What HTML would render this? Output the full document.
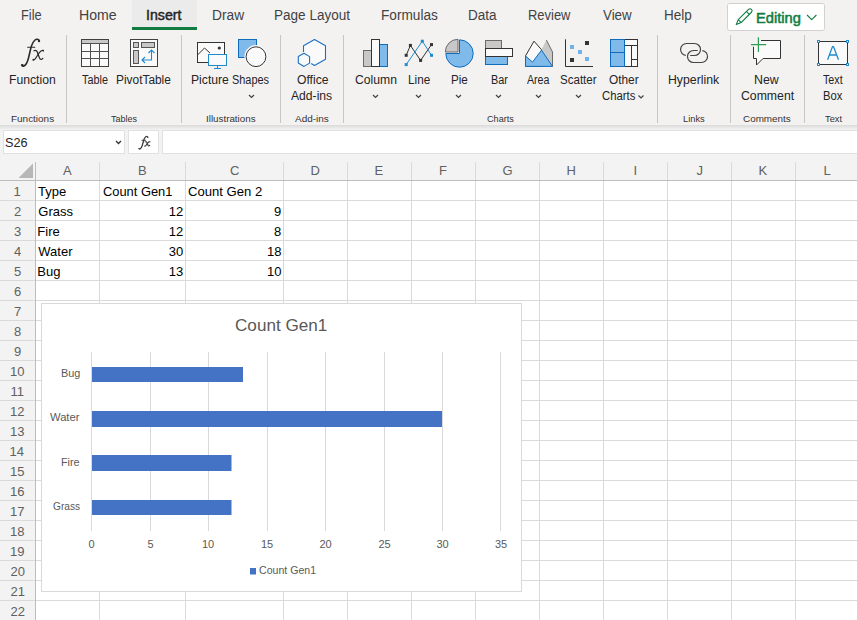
<!DOCTYPE html>
<html><head><meta charset="utf-8">
<style>
html,body{margin:0;padding:0}
body{width:857px;height:620px;overflow:hidden;position:relative;background:#fff;font-family:"Liberation Sans",sans-serif}
.t{position:absolute;white-space:nowrap;line-height:1;transform-origin:0 0}
svg{position:absolute;left:0;top:0}
</style></head><body>
<svg width="857" height="620" viewBox="0 0 857 620">
<!-- ribbon -->
<rect x="0" y="0" width="857" height="125" fill="#f3f2f1"/>
<defs><linearGradient id="sh" x1="0" y1="0" x2="0" y2="1"><stop offset="0" stop-color="#000" stop-opacity="0.10"/><stop offset="1" stop-color="#000" stop-opacity="0"/></linearGradient></defs>
<rect x="0" y="125" width="857" height="37" fill="#f3f3f3"/>
<rect x="0" y="125" width="857" height="5" fill="url(#sh)"/>
<!-- insert tab -->
<rect x="132" y="0" width="65" height="27" fill="#ebebeb"/>
<rect x="132" y="27" width="65" height="3" fill="#107c41"/>
<!-- editing button -->
<rect x="727.5" y="3.5" width="97" height="27" rx="2" fill="#fff" stroke="#d1d1d1"/>
<g fill="none" stroke="#107c41" stroke-width="1.1" stroke-linejoin="round">
<path d="M736.2,24.6 L738.25,19.65 L748.54,9.36 A2.05,2.05 0 0 1 751.44,12.26 L741.15,22.55 Z"/>
<path d="M738.25,19.65 L741.15,22.55 M746.42,11.48 L749.32,14.38"/>
<polyline points="807,15 811.7,19.6 816.4,15"/>
</g>
<!-- dividers -->
<g fill="#c8c6c4">
<rect x="66" y="35" width="1" height="88"/><rect x="181" y="35" width="1" height="88"/>
<rect x="280" y="35" width="1" height="88"/><rect x="343" y="35" width="1" height="88"/>
<rect x="657" y="35" width="1" height="88"/><rect x="730" y="35" width="1" height="88"/>
<rect x="804" y="35" width="1" height="88"/>
</g>
<g><g fill="none" stroke="#2b2b2b" stroke-linecap="round">
<path d="M39.2,40.6 C38.5,39 36.5,38.8 35,40 C33,41.7 31.5,45 30.5,49.5 L28.5,58 C27.5,62 26,65 24,66 C23,66.4 22,66 21.8,65" stroke-width="1.6"/>
<path d="M27.7,47.3 H34.8" stroke-width="1.1"/>
<path d="M34,50.8 C35.5,50 36.8,50.5 37.5,52.5 L39.5,58 C40.2,59.8 41.5,60 42.8,58.3" stroke-width="1.25"/>
<path d="M43.4,50.5 C42,50 40.5,51 39,53 L35.5,58.5 C34.8,59.6 34,60 33.2,59.8" stroke-width="1.25"/>
</g><g fill="#2b2b2b"><circle cx="39" cy="41" r="1.2"/><circle cx="22.4" cy="65.1" r="1.2"/><circle cx="43.2" cy="50.7" r="0.9"/><circle cx="33.4" cy="59.7" r="0.9"/></g></g>
<!-- Table icon -->
<g stroke-width="1">
<rect x="81.5" y="39.5" width="27" height="27" fill="#fafafa" stroke="#404040"/>
<rect x="82" y="40" width="26" height="3" fill="#c8c8c8"/>
<path d="M82,43.5H108M82,51.5H108M82,58.5H108M90.5,43.5V66M99.5,43.5V66" stroke="#505050" fill="none"/>
</g>
<!-- PivotTable icon -->
<rect x="130.5" y="39.5" width="27" height="27" fill="#fafafa" stroke="#404040"/>
<g fill="#c8c8c8" stroke="#555">
<rect x="133.5" y="42.5" width="5" height="5"/><rect x="141.5" y="42.5" width="13" height="5"/><rect x="133.5" y="50.5" width="5" height="13"/>
</g>
<path d="M142,60H151.5V50 M145,57L142,60L145,63 M148.5,53L151.5,50L154.5,53" fill="none" stroke="#1e8bcd" stroke-width="1.1"/>
<!-- Picture icon -->
<rect x="197.5" y="42.5" width="27" height="20" fill="#fafafa" stroke="#333"/>
<polyline points="197.5,55 204.5,48 210,53" fill="none" stroke="#333"/>
<circle cx="219.3" cy="48" r="1.6" fill="#333"/>
<rect x="208.5" y="54.5" width="18" height="11" fill="#fafafa" stroke="#1e8bcd"/>
<path d="M217.5,66V68.5M214,68.5H221" stroke="#1e8bcd" fill="none"/>
<!-- Shapes icon -->
<rect x="238.5" y="39.5" width="18" height="18" fill="#7fbaea" stroke="#0f6cbd"/>
<circle cx="256" cy="56.7" r="11.6" fill="#f8f8f8"/>
<circle cx="256" cy="56.7" r="9.9" fill="#fafafa" stroke="#333"/>
<!-- Office Add-ins -->
<path d="M303.5,45.7 L314.5,39.5 L325.5,45.7 V59.3 L314.5,65.5 L303.5,59.3 Z" fill="#fafafa"/>
<g fill="none" stroke="#1a70c5" stroke-width="1.1" stroke-linejoin="round">
<path d="M303.5,51.9 V45.7 L314.5,39.5 L325.5,45.7 V59.3 L314.5,65.5 L311.2,63.6"/>
<path d="M304,53.3 L309.6,56.6 V63.1 L304,66.4 L298.3,63.1 V56.6 Z" fill="#fafafa"/>
</g>
<!-- Column icon -->
<rect x="363.5" y="50.5" width="8" height="16" fill="#c8c8c8" stroke="#6b6b6b"/>
<rect x="379.5" y="44.5" width="8" height="22" fill="#7fbaea" stroke="#0f6cbd"/>
<rect x="371.5" y="39.5" width="8" height="27" fill="#fafafa" stroke="#333"/>
<!-- Line icon -->
<polyline points="406.2,55.3 410.4,45.4 420.6,60.4 431.5,44.6" fill="none" stroke="#333"/>
<polyline points="406.2,64.6 422.3,41.2 431.5,55.3" fill="none" stroke="#1e8bcd"/>
<g fill="#333"><rect x="404.7" y="53.8" width="3" height="3"/><rect x="408.9" y="43.9" width="3" height="3"/><rect x="419.1" y="58.9" width="3" height="3"/><rect x="430" y="43.1" width="3" height="3"/></g>
<g fill="#1e8bcd"><rect x="404.7" y="63.1" width="3" height="3"/><rect x="420.8" y="39.7" width="3" height="3"/><rect x="430" y="53.8" width="3" height="3"/></g>
<!-- Pie icon -->
<path d="M459.5,53.5 H445.8 A13.7,13.7 0 1 0 459.5,39.8 Z" fill="#7fbaea" stroke="#0f6cbd"/>
<path d="M458,52 V39.3 A12.7,12.7 0 0 0 445.3,52 Z" fill="#c8c8c8" stroke="#6b6b6b"/>
<!-- Bar icon -->
<rect x="485.5" y="40.5" width="16" height="8" fill="#c8c8c8" stroke="#6b6b6b"/>
<rect x="485.5" y="56.5" width="22" height="8" fill="#7fbaea" stroke="#0f6cbd"/>
<rect x="485.5" y="48.5" width="27" height="8" fill="#fafafa" stroke="#333"/>
<!-- Area icon -->
<path d="M541.5,49.7 L546.4,40.1 L552.5,52 V66.4 H541.5 Z" fill="#c8c8c8"/>
<path d="M546.4,40.1 L552.5,52 V66.4" fill="none" stroke="#6b6b6b"/>
<path d="M525.5,55.9 L534,41.2 L541.5,49.7 L541.5,66.4 H525.5 Z" fill="#fafafa" stroke="#333" stroke-linejoin="round"/>
<path d="M525.5,55.9 L532.5,62.1 L541.5,50.2 L552.5,66.4 H525.5 Z" fill="#7fbaea" stroke="#0f6cbd" stroke-linejoin="round"/>
<!-- Scatter icon -->
<polyline points="565.5,39.3 565.5,66.5 593,66.5" fill="none" stroke="#333"/>
<g fill="#333"><rect x="585" y="41" width="4" height="4"/><rect x="570" y="58" width="4" height="4"/></g>
<g fill="#6fb3ea"><rect x="570" y="45" width="4" height="4"/><rect x="578" y="50" width="4" height="4"/><rect x="585" y="57" width="4" height="4"/></g>
<!-- Other charts icon -->
<rect x="610.5" y="39.5" width="27" height="27" fill="#fafafa" stroke="#333"/>
<rect x="610.5" y="39.5" width="14" height="27" fill="#7fbaea" stroke="#0f6cbd"/>
<path d="M611,52.5H624" stroke="#0f6cbd"/>
<path d="M625,45.5H637M631.5,45.5V66M631.5,59.5H637" stroke="#333" fill="none"/>
<!-- Hyperlink icon -->
<g fill="none" stroke="#444" stroke-width="1.2">
<path d="M690.2,55.5 H694.5 A6,6 0 0 0 694.5,43.5 H686.5 A6,6 0 0 0 685.8,55.45"/>
<path d="M697.7,50.5 H693.5 A6,6 0 0 0 693.5,62.5 H701.5 A6,6 0 0 0 702.3,50.55"/>
</g>
<!-- New comment icon -->
<path d="M761,40.5 H780.5 V58.5 H763 L756.5,65 V58.5 H753.5 V46.8" fill="#fafafa" stroke="#333"/>
<path d="M750.9,44.6H766.2M758.4,37.2V51.9" stroke="#2f9e55" stroke-width="1.2"/>
<!-- Text box icon -->
<rect x="818.5" y="41.5" width="29" height="23" fill="#fafafa" stroke="#333"/>
<g fill="#fff" stroke="#1e8bcd"><rect x="817.5" y="40.5" width="2" height="2"/><rect x="846.5" y="40.5" width="2" height="2"/><rect x="817.5" y="63.5" width="2" height="2"/><rect x="846.5" y="63.5" width="2" height="2"/></g>
<path d="M827.6,59.8 L832.5,46.6 H833.5 L838.5,59.8 M829.4,55 H836.7" fill="none" stroke="#1e8bcd" stroke-width="1.3"/>
<!-- chevrons -->
<g fill="none" stroke="#424242" stroke-width="1.2">
<polyline points="249,95 251.5,97.5 254,95"/>
<polyline points="373,95 375.5,97.5 378,95"/>
<polyline points="416,95 418.5,97.5 421,95"/>
<polyline points="456,95 458.5,97.5 461,95"/>
<polyline points="496,95 498.5,97.5 501,95"/>
<polyline points="536,95 538.5,97.5 541,95"/>
<polyline points="576,95 578.5,97.5 581,95"/>
<polyline points="638.5,95.5 641,98 643.5,95.5"/>
</g>
<!-- formula bar -->
<rect x="3.5" y="130.5" width="121" height="23" fill="#fff" stroke="#e1e1e1"/>
<polyline points="116,141 118.5,143.5 121,141" fill="none" stroke="#333" stroke-width="1.3"/>
<rect x="128.5" y="130.5" width="30" height="23" fill="#fff" stroke="#e1e1e1"/>
<rect x="162.5" y="130.5" width="700" height="23" fill="#fff" stroke="#e1e1e1"/>
<g transform="translate(127.84,118.2) scale(0.51,0.466)"><g fill="none" stroke="#3a3a3a" stroke-linecap="round">
<path d="M39.2,40.6 C38.5,39 36.5,38.8 35,40 C33,41.7 31.5,45 30.5,49.5 L28.5,58 C27.5,62 26,65 24,66 C23,66.4 22,66 21.8,65" stroke-width="2.6"/>
<path d="M27.7,47.3 H34.8" stroke-width="2.0"/>
<path d="M34,50.8 C35.5,50 36.8,50.5 37.5,52.5 L39.5,58 C40.2,59.8 41.5,60 42.8,58.3" stroke-width="2.2"/>
<path d="M43.4,50.5 C42,50 40.5,51 39,53 L35.5,58.5 C34.8,59.6 34,60 33.2,59.8" stroke-width="2.2"/>
</g><g fill="#3a3a3a"><circle cx="39" cy="41" r="1.2"/><circle cx="22.4" cy="65.1" r="1.2"/><circle cx="43.2" cy="50.7" r="0.9"/><circle cx="33.4" cy="59.7" r="0.9"/></g></g>
<!-- grid headers -->
<rect x="0" y="162" width="857" height="18" fill="#f3f3f3"/>
<rect x="0" y="180" width="35" height="440" fill="#f3f3f3"/>
<polygon points="33,163.5 33,178 18.5,178" fill="#b7b7b7"/>
<g fill="#dadada">
<rect x="99" y="162" width="1" height="458"/><rect x="185" y="162" width="1" height="458"/><rect x="283" y="162" width="1" height="458"/>
<rect x="347" y="162" width="1" height="458"/><rect x="411" y="162" width="1" height="458"/><rect x="475" y="162" width="1" height="458"/>
<rect x="539" y="162" width="1" height="458"/><rect x="603" y="162" width="1" height="458"/><rect x="667" y="162" width="1" height="458"/>
<rect x="731" y="162" width="1" height="458"/><rect x="795" y="162" width="1" height="458"/>
</g>
<g fill="#dadada"><rect x="0" y="200" width="857" height="1"/><rect x="0" y="220" width="857" height="1"/><rect x="0" y="240" width="857" height="1"/><rect x="0" y="260" width="857" height="1"/><rect x="0" y="280" width="857" height="1"/><rect x="0" y="300" width="857" height="1"/><rect x="0" y="320" width="857" height="1"/><rect x="0" y="340" width="857" height="1"/><rect x="0" y="360" width="857" height="1"/><rect x="0" y="380" width="857" height="1"/><rect x="0" y="400" width="857" height="1"/><rect x="0" y="420" width="857" height="1"/><rect x="0" y="440" width="857" height="1"/><rect x="0" y="460" width="857" height="1"/><rect x="0" y="480" width="857" height="1"/><rect x="0" y="500" width="857" height="1"/><rect x="0" y="520" width="857" height="1"/><rect x="0" y="540" width="857" height="1"/><rect x="0" y="560" width="857" height="1"/><rect x="0" y="580" width="857" height="1"/><rect x="0" y="600" width="857" height="1"/></g>
<rect x="0" y="180" width="857" height="1" fill="#bdbdbd"/>
<rect x="35" y="162" width="1" height="458" fill="#bdbdbd"/>
<!-- chart -->
<rect x="41.5" y="303.5" width="480" height="288" fill="#fff" stroke="#d9d9d9"/>
<g fill="#d9d9d9">
<rect x="91" y="352" width="1" height="179"/><rect x="150" y="352" width="1" height="179"/><rect x="208" y="352" width="1" height="179"/>
<rect x="267" y="352" width="1" height="179"/><rect x="325" y="352" width="1" height="179"/><rect x="384" y="352" width="1" height="179"/>
<rect x="442" y="352" width="1" height="179"/><rect x="500" y="352" width="1" height="179"/>
</g>
<g fill="#4472c4">
<rect x="92" y="367" width="151" height="15"/>
<rect x="92" y="411" width="350" height="16"/>
<rect x="92" y="455" width="139.5" height="16"/>
<rect x="92" y="500" width="139.5" height="15"/>
<rect x="250" y="568" width="6" height="6.5"/>
</g>
</svg>
<span class="t" style="left:20.69px;top:8px;font-size:14px;color:#424242;transform:scaleX(0.914)">File</span>
<span class="t" style="left:79.49px;top:8px;font-size:14px;color:#424242;transform:scaleX(1.008)">Home</span>
<span class="t" style="left:146.39px;top:8px;font-size:14px;color:#242424;transform:scaleX(1.012);-webkit-text-stroke:0.45px #242424">Insert</span>
<span class="t" style="left:212.32px;top:8px;font-size:14px;color:#424242;transform:scaleX(0.984)">Draw</span>
<span class="t" style="left:274.13px;top:8px;font-size:14px;color:#424242;transform:scaleX(0.967)">Page Layout</span>
<span class="t" style="left:381.12px;top:8px;font-size:14px;color:#424242;transform:scaleX(0.975)">Formulas</span>
<span class="t" style="left:467.53px;top:8px;font-size:14px;color:#424242;transform:scaleX(0.966)">Data</span>
<span class="t" style="left:528.28px;top:8px;font-size:14px;color:#424242;transform:scaleX(0.924)">Review</span>
<span class="t" style="left:603.30px;top:8px;font-size:14px;color:#424242;transform:scaleX(0.953)">View</span>
<span class="t" style="left:663.64px;top:8px;font-size:14px;color:#424242;transform:scaleX(0.964)">Help</span>
<span class="t" style="left:755.65px;top:11px;font-size:14px;color:#107c41;transform:scaleX(1.046);-webkit-text-stroke:0.5px #107c41">Editing</span>
<span class="t" style="left:8.58px;top:74px;font-size:12px;color:#242424;transform:scaleX(1.016)">Function</span>
<span class="t" style="left:82.30px;top:74px;font-size:12px;color:#242424;transform:scaleX(0.903)">Table</span>
<span class="t" style="left:116.31px;top:74px;font-size:12px;color:#242424;transform:scaleX(0.991)">PivotTable</span>
<span class="t" style="left:191.49px;top:74px;font-size:12px;color:#242424;transform:scaleX(1.014)">Picture</span>
<span class="t" style="left:232.29px;top:74px;font-size:12px;color:#242424;transform:scaleX(0.910)">Shapes</span>
<span class="t" style="left:296.70px;top:74px;font-size:12px;color:#242424;transform:scaleX(1.010)">Office</span>
<span class="t" style="left:291.30px;top:90px;font-size:12px;color:#242424;transform:scaleX(1.012)">Add-ins</span>
<span class="t" style="left:354.70px;top:74px;font-size:12px;color:#242424;transform:scaleX(1.015)">Column</span>
<span class="t" style="left:407.52px;top:74px;font-size:12px;color:#242424;transform:scaleX(0.977)">Line</span>
<span class="t" style="left:450.73px;top:74px;font-size:12px;color:#242424;transform:scaleX(0.969)">Pie</span>
<span class="t" style="left:490.59px;top:74px;font-size:12px;color:#242424;transform:scaleX(0.906)">Bar</span>
<span class="t" style="left:527.20px;top:74px;font-size:12px;color:#242424;transform:scaleX(0.885)">Area</span>
<span class="t" style="left:560.34px;top:74px;font-size:12px;color:#242424;transform:scaleX(0.962)">Scatter</span>
<span class="t" style="left:609.40px;top:74px;font-size:12px;color:#242424;transform:scaleX(0.987)">Other</span>
<span class="t" style="left:601.80px;top:90px;font-size:12px;color:#242424;transform:scaleX(0.943)">Charts</span>
<span class="t" style="left:667.58px;top:74px;font-size:12px;color:#242424;transform:scaleX(1.022)">Hyperlink</span>
<span class="t" style="left:754.47px;top:74px;font-size:12px;color:#242424;transform:scaleX(1.030)">New</span>
<span class="t" style="left:740.80px;top:90px;font-size:12px;color:#242424;transform:scaleX(1.021)">Comment</span>
<span class="t" style="left:823.10px;top:74px;font-size:12px;color:#242424;transform:scaleX(0.895)">Text</span>
<span class="t" style="left:822.67px;top:90px;font-size:12px;color:#242424;transform:scaleX(0.935)">Box</span>
<span class="t" style="left:11.20px;top:115px;font-size:9px;color:#333333;transform:scaleX(1.105)">Functions</span>
<span class="t" style="left:111.00px;top:115px;font-size:9px;color:#333333">Tables</span>
<span class="t" style="left:206.11px;top:115px;font-size:9px;color:#333333;transform:scaleX(1.089)">Illustrations</span>
<span class="t" style="left:294.70px;top:115px;font-size:9px;color:#333333;transform:scaleX(1.106)">Add-ins</span>
<span class="t" style="left:486.50px;top:115px;font-size:9px;color:#333333;transform:scaleX(1.011)">Charts</span>
<span class="t" style="left:683.00px;top:115px;font-size:9px;color:#333333;transform:scaleX(1.033)">Links</span>
<span class="t" style="left:742.50px;top:115px;font-size:9px;color:#333333;transform:scaleX(1.098)">Comments</span>
<span class="t" style="left:824.80px;top:115px;font-size:9px;color:#333333;transform:scaleX(1.029)">Text</span>
<span class="t" style="left:5.12px;top:136px;font-size:13px;color:#242424;transform:scaleX(0.977)">S26</span>
<span class="t" style="left:38.00px;top:185px;font-size:13px;color:#000000">Type</span>
<span class="t" style="left:38.30px;top:205px;font-size:13px;color:#000000">Grass</span>
<span class="t" style="left:37.30px;top:225px;font-size:13px;color:#000000">Fire</span>
<span class="t" style="left:38.30px;top:245px;font-size:13px;color:#000000">Water</span>
<span class="t" style="left:37.30px;top:265px;font-size:13px;color:#000000">Bug</span>
<span class="t" style="left:102.60px;top:185px;font-size:13px;color:#000000;transform:scaleX(0.990)">Count Gen1</span>
<span class="t" style="left:188.30px;top:185px;font-size:13px;color:#000000;transform:scaleX(1.007)">Count Gen 2</span>
<span class="t" style="left:235.49px;top:317px;font-size:17px;color:#595959;transform:scaleX(1.007)">Count Gen1</span>
<span class="t" style="left:259.40px;top:565px;font-size:11px;color:#595959;transform:scaleX(0.963)">Count Gen1</span>
<span class="t" style="left:63.00px;top:164px;font-size:13px;color:#616161">A</span>
<span class="t" style="left:138.00px;top:164px;font-size:13px;color:#616161">B</span>
<span class="t" style="left:230.00px;top:164px;font-size:13px;color:#616161">C</span>
<span class="t" style="left:310.50px;top:164px;font-size:13px;color:#616161">D</span>
<span class="t" style="left:374.50px;top:164px;font-size:13px;color:#616161">E</span>
<span class="t" style="left:439.00px;top:164px;font-size:13px;color:#616161">F</span>
<span class="t" style="left:502.50px;top:164px;font-size:13px;color:#616161">G</span>
<span class="t" style="left:566.50px;top:164px;font-size:13px;color:#616161">H</span>
<span class="t" style="left:633.50px;top:164px;font-size:13px;color:#616161">I</span>
<span class="t" style="left:696.50px;top:164px;font-size:13px;color:#616161">J</span>
<span class="t" style="left:758.50px;top:164px;font-size:13px;color:#616161">K</span>
<span class="t" style="left:823.50px;top:164px;font-size:13px;color:#616161">L</span>
<span class="t" style="left:13.50px;top:185px;font-size:13px;color:#616161">1</span>
<span class="t" style="left:14.00px;top:205px;font-size:13px;color:#616161">2</span>
<span class="t" style="left:14.00px;top:225px;font-size:13px;color:#616161">3</span>
<span class="t" style="left:14.00px;top:245px;font-size:13px;color:#616161">4</span>
<span class="t" style="left:14.00px;top:265px;font-size:13px;color:#616161">5</span>
<span class="t" style="left:14.00px;top:285px;font-size:13px;color:#616161">6</span>
<span class="t" style="left:14.00px;top:305px;font-size:13px;color:#616161">7</span>
<span class="t" style="left:14.00px;top:325px;font-size:13px;color:#616161">8</span>
<span class="t" style="left:14.00px;top:345px;font-size:13px;color:#616161">9</span>
<span class="t" style="left:10.00px;top:365px;font-size:13px;color:#616161">10</span>
<span class="t" style="left:10.50px;top:385px;font-size:13px;color:#616161">11</span>
<span class="t" style="left:10.00px;top:405px;font-size:13px;color:#616161">12</span>
<span class="t" style="left:10.00px;top:425px;font-size:13px;color:#616161">13</span>
<span class="t" style="left:9.50px;top:445px;font-size:13px;color:#616161">14</span>
<span class="t" style="left:10.00px;top:465px;font-size:13px;color:#616161">15</span>
<span class="t" style="left:10.00px;top:485px;font-size:13px;color:#616161">16</span>
<span class="t" style="left:10.00px;top:505px;font-size:13px;color:#616161">17</span>
<span class="t" style="left:10.00px;top:525px;font-size:13px;color:#616161">18</span>
<span class="t" style="left:10.00px;top:545px;font-size:13px;color:#616161">19</span>
<span class="t" style="left:10.50px;top:565px;font-size:13px;color:#616161">20</span>
<span class="t" style="left:10.50px;top:585px;font-size:13px;color:#616161">21</span>
<span class="t" style="left:10.50px;top:605px;font-size:13px;color:#616161">22</span>
<span class="t" style="left:88.50px;top:539px;font-size:11px;color:#595959">0</span>
<span class="t" style="left:147.50px;top:539px;font-size:11px;color:#595959">5</span>
<span class="t" style="left:202.00px;top:539px;font-size:11px;color:#595959">10</span>
<span class="t" style="left:261.00px;top:539px;font-size:11px;color:#595959">15</span>
<span class="t" style="left:319.50px;top:539px;font-size:11px;color:#595959">20</span>
<span class="t" style="left:378.50px;top:539px;font-size:11px;color:#595959">25</span>
<span class="t" style="left:436.50px;top:539px;font-size:11px;color:#595959">30</span>
<span class="t" style="left:495.00px;top:539px;font-size:11px;color:#595959">35</span>
<span class="t" style="left:168.70px;top:205px;font-size:13px;color:#000000">12</span>
<span class="t" style="left:274.00px;top:205px;font-size:13px;color:#000000">9</span>
<span class="t" style="left:168.70px;top:225px;font-size:13px;color:#000000">12</span>
<span class="t" style="left:274.00px;top:225px;font-size:13px;color:#000000">8</span>
<span class="t" style="left:168.70px;top:245px;font-size:13px;color:#000000">30</span>
<span class="t" style="left:267.00px;top:245px;font-size:13px;color:#000000">18</span>
<span class="t" style="left:168.70px;top:265px;font-size:13px;color:#000000">13</span>
<span class="t" style="left:267.00px;top:265px;font-size:13px;color:#000000">10</span>
<span class="t" style="left:61.21px;top:368px;font-size:11px;color:#595959;transform:scaleX(0.989)">Bug</span>
<span class="t" style="left:50.10px;top:412px;font-size:11px;color:#595959;transform:scaleX(1.017)">Water</span>
<span class="t" style="left:61.32px;top:457px;font-size:11px;color:#595959;transform:scaleX(0.983)">Fire</span>
<span class="t" style="left:53.30px;top:501px;font-size:11px;color:#595959;transform:scaleX(0.921)">Grass</span>

</body></html>
